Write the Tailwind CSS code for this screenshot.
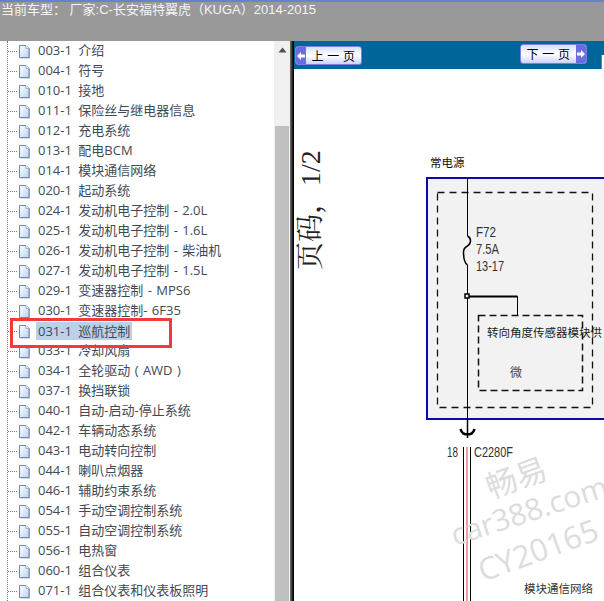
<!doctype html>
<html>
<head>
<meta charset="utf-8">
<script src="https://cdn.jsdelivr.net/npm/@tailwindcss/browser@4"></script>
</head>
<body class="bg-white">
<svg class="absolute w-0 h-0">
  <defs>
    <linearGradient id="page-fill" x1="0" y1="0" x2="1" y2="1">
      <stop offset="0" stop-color="#ffffff" />
      <stop offset="1" stop-color="#bcd2f5" />
    </linearGradient>
    <symbol id="page" viewBox="0 0 13 15">
      <path d="M2.500 2.500h7l2.500 2.500v9.500h-9.500z" fill="#b8b8b8" />
      <path d="M1.500 1.500h6.500l3 3v9h-9.500z" fill="url(#page-fill)" stroke="#6f86b4" stroke-width="1" />
      <path d="M8 1.500v3h3" fill="#f4f8ff" stroke="#9db0d0" stroke-width="1" />
    </symbol>
  </defs>
</svg>

<div class="w-[604px] h-[601px] overflow-hidden flex flex-col font-['Open_Sans','Noto_Sans_CJK_SC',sans-serif]">
  <!-- top bar -->
  <div class="h-[41px] shrink-0 bg-[#999999] border-t-2 border-[#6a80cf] text-[13px] leading-[15px] pl-px text-[#f4f4f4] whitespace-pre font-['Liberation_Sans','Noto_Sans_CJK_SC',sans-serif]">当前车型： 厂家:C-长安福特翼虎（KUGA）2014-2015</div>

  <div class="flex flex-1 min-h-0">
    <!-- tree -->
    <div class="w-[274px] shrink-0 relative text-[13px] text-[#414a54] [word-spacing:3px]">
      <div class="absolute left-[7px] top-0 bottom-0 border-l border-dotted border-[#777777]"></div>
      <div class="flex h-5 items-center"><span class="ml-[8px] w-[9px] border-t border-dotted border-[#777777]"></span><svg class="ml-px w-[13px] h-[15px]"><use href="#page" /></svg><span class="ml-[7px] whitespace-pre">003-1 介绍</span></div>
      <div class="flex h-5 items-center"><span class="ml-[8px] w-[9px] border-t border-dotted border-[#777777]"></span><svg class="ml-px w-[13px] h-[15px]"><use href="#page" /></svg><span class="ml-[7px] whitespace-pre">004-1 符号</span></div>
      <div class="flex h-5 items-center"><span class="ml-[8px] w-[9px] border-t border-dotted border-[#777777]"></span><svg class="ml-px w-[13px] h-[15px]"><use href="#page" /></svg><span class="ml-[7px] whitespace-pre">010-1 接地</span></div>
      <div class="flex h-5 items-center"><span class="ml-[8px] w-[9px] border-t border-dotted border-[#777777]"></span><svg class="ml-px w-[13px] h-[15px]"><use href="#page" /></svg><span class="ml-[7px] whitespace-pre">011-1 保险丝与继电器信息</span></div>
      <div class="flex h-5 items-center"><span class="ml-[8px] w-[9px] border-t border-dotted border-[#777777]"></span><svg class="ml-px w-[13px] h-[15px]"><use href="#page" /></svg><span class="ml-[7px] whitespace-pre">012-1 充电系统</span></div>
      <div class="flex h-5 items-center"><span class="ml-[8px] w-[9px] border-t border-dotted border-[#777777]"></span><svg class="ml-px w-[13px] h-[15px]"><use href="#page" /></svg><span class="ml-[7px] whitespace-pre">013-1 配电BCM</span></div>
      <div class="flex h-5 items-center"><span class="ml-[8px] w-[9px] border-t border-dotted border-[#777777]"></span><svg class="ml-px w-[13px] h-[15px]"><use href="#page" /></svg><span class="ml-[7px] whitespace-pre">014-1 模块通信网络</span></div>
      <div class="flex h-5 items-center"><span class="ml-[8px] w-[9px] border-t border-dotted border-[#777777]"></span><svg class="ml-px w-[13px] h-[15px]"><use href="#page" /></svg><span class="ml-[7px] whitespace-pre">020-1 起动系统</span></div>
      <div class="flex h-5 items-center"><span class="ml-[8px] w-[9px] border-t border-dotted border-[#777777]"></span><svg class="ml-px w-[13px] h-[15px]"><use href="#page" /></svg><span class="ml-[7px] whitespace-pre">024-1 发动机电子控制<span class="[word-spacing:1px]"> - 2.0L</span></span></div>
      <div class="flex h-5 items-center"><span class="ml-[8px] w-[9px] border-t border-dotted border-[#777777]"></span><svg class="ml-px w-[13px] h-[15px]"><use href="#page" /></svg><span class="ml-[7px] whitespace-pre">025-1 发动机电子控制<span class="[word-spacing:1px]"> - 1.6L</span></span></div>
      <div class="flex h-5 items-center"><span class="ml-[8px] w-[9px] border-t border-dotted border-[#777777]"></span><svg class="ml-px w-[13px] h-[15px]"><use href="#page" /></svg><span class="ml-[7px] whitespace-pre">026-1 发动机电子控制<span class="[word-spacing:1px]"> - 柴油机</span></span></div>
      <div class="flex h-5 items-center"><span class="ml-[8px] w-[9px] border-t border-dotted border-[#777777]"></span><svg class="ml-px w-[13px] h-[15px]"><use href="#page" /></svg><span class="ml-[7px] whitespace-pre">027-1 发动机电子控制<span class="[word-spacing:1px]"> - 1.5L</span></span></div>
      <div class="flex h-5 items-center"><span class="ml-[8px] w-[9px] border-t border-dotted border-[#777777]"></span><svg class="ml-px w-[13px] h-[15px]"><use href="#page" /></svg><span class="ml-[7px] whitespace-pre">029-1 变速器控制<span class="[word-spacing:1px]"> - MPS6</span></span></div>
      <div class="flex h-5 items-center"><span class="ml-[8px] w-[9px] border-t border-dotted border-[#777777]"></span><svg class="ml-px w-[13px] h-[15px]"><use href="#page" /></svg><span class="ml-[7px] whitespace-pre">030-1 变速器控制-<span class="[word-spacing:1px]"> 6F35</span></span></div>
      <!-- selected row -->
      <div class="flex h-5 items-center relative"><span class="ml-[8px] w-[9px] border-t border-dotted border-[#777777]"></span><svg class="ml-px w-[13px] h-[15px]"><use href="#page" /></svg><span class="ml-[5px] px-[2px] bg-[#bcd0ea] h-[18px] leading-[18px] whitespace-pre">031-1 巡航控制</span><div class="absolute left-[10px] -top-[3px] w-[162px] h-[30px] border-[3px] border-[#f33a3a] z-10"></div></div>
      <div class="flex h-5 items-center"><span class="ml-[8px] w-[9px] border-t border-dotted border-[#777777]"></span><svg class="ml-px w-[13px] h-[15px]"><use href="#page" /></svg><span class="ml-[7px] whitespace-pre">033-1 冷却风扇</span></div>
      <div class="flex h-5 items-center"><span class="ml-[8px] w-[9px] border-t border-dotted border-[#777777]"></span><svg class="ml-px w-[13px] h-[15px]"><use href="#page" /></svg><span class="ml-[7px] whitespace-pre">034-1 全轮驱动<span class="[word-spacing:1px]"> ( AWD )</span></span></div>
      <div class="flex h-5 items-center"><span class="ml-[8px] w-[9px] border-t border-dotted border-[#777777]"></span><svg class="ml-px w-[13px] h-[15px]"><use href="#page" /></svg><span class="ml-[7px] whitespace-pre">037-1 换挡联锁</span></div>
      <div class="flex h-5 items-center"><span class="ml-[8px] w-[9px] border-t border-dotted border-[#777777]"></span><svg class="ml-px w-[13px] h-[15px]"><use href="#page" /></svg><span class="ml-[7px] whitespace-pre">040-1 自动-启动-停止系统</span></div>
      <div class="flex h-5 items-center"><span class="ml-[8px] w-[9px] border-t border-dotted border-[#777777]"></span><svg class="ml-px w-[13px] h-[15px]"><use href="#page" /></svg><span class="ml-[7px] whitespace-pre">042-1 车辆动态系统</span></div>
      <div class="flex h-5 items-center"><span class="ml-[8px] w-[9px] border-t border-dotted border-[#777777]"></span><svg class="ml-px w-[13px] h-[15px]"><use href="#page" /></svg><span class="ml-[7px] whitespace-pre">043-1 电动转向控制</span></div>
      <div class="flex h-5 items-center"><span class="ml-[8px] w-[9px] border-t border-dotted border-[#777777]"></span><svg class="ml-px w-[13px] h-[15px]"><use href="#page" /></svg><span class="ml-[7px] whitespace-pre">044-1 喇叭点烟器</span></div>
      <div class="flex h-5 items-center"><span class="ml-[8px] w-[9px] border-t border-dotted border-[#777777]"></span><svg class="ml-px w-[13px] h-[15px]"><use href="#page" /></svg><span class="ml-[7px] whitespace-pre">046-1 辅助约束系统</span></div>
      <div class="flex h-5 items-center"><span class="ml-[8px] w-[9px] border-t border-dotted border-[#777777]"></span><svg class="ml-px w-[13px] h-[15px]"><use href="#page" /></svg><span class="ml-[7px] whitespace-pre">054-1 手动空调控制系统</span></div>
      <div class="flex h-5 items-center"><span class="ml-[8px] w-[9px] border-t border-dotted border-[#777777]"></span><svg class="ml-px w-[13px] h-[15px]"><use href="#page" /></svg><span class="ml-[7px] whitespace-pre">055-1 自动空调控制系统</span></div>
      <div class="flex h-5 items-center"><span class="ml-[8px] w-[9px] border-t border-dotted border-[#777777]"></span><svg class="ml-px w-[13px] h-[15px]"><use href="#page" /></svg><span class="ml-[7px] whitespace-pre">056-1 电热窗</span></div>
      <div class="flex h-5 items-center"><span class="ml-[8px] w-[9px] border-t border-dotted border-[#777777]"></span><svg class="ml-px w-[13px] h-[15px]"><use href="#page" /></svg><span class="ml-[7px] whitespace-pre">060-1 组合仪表</span></div>
      <div class="flex h-5 items-center"><span class="ml-[8px] w-[9px] border-t border-dotted border-[#777777]"></span><svg class="ml-px w-[13px] h-[15px]"><use href="#page" /></svg><span class="ml-[7px] whitespace-pre">071-1 组合仪表和仪表板照明</span></div>
    </div>

    <!-- scrollbar -->
    <div class="w-4 shrink-0 bg-[#f0f0f0] flex flex-col items-center">
      <svg class="mt-[6px] w-[9px] h-[6px]" viewBox="0 0 9 6"><path d="M4.500 0.500L8.500 5.500H0.500z" fill="#505050" /></svg>
      <div class="mt-[73px] w-[14px] flex-1 bg-[#c0c0c0]"></div>
    </div>
    <div class="w-[4px] shrink-0 bg-gradient-to-r from-[#777777] via-[#333333] to-black"></div>

    <!-- document -->
    <div class="flex-1 min-w-0 flex flex-col">
      <div class="h-7 shrink-0 bg-[#006699] flex justify-between pl-px pr-[17px] relative">
        <button class="mt-[5px] w-[67px] h-[19px] flex items-center overflow-hidden rounded-[3px] border border-[#7c80dc] bg-gradient-to-b from-[#d8ddfb] via-white to-[#ccd2fa] text-[12px] leading-none text-black font-['Noto_Sans_CJK_SC',sans-serif]">
          <span class="w-[10px] h-full shrink-0 bg-[#6a6ce0] flex items-center justify-center">
            <svg class="w-[8px] h-[8px]" viewBox="0 0 8 8"><path d="M0 4L4 0V2.500H8V5.500H4V8z" fill="#ffffff" /></svg>
          </span>
          <span class="flex-1 text-center tracking-[0.5px] whitespace-pre">上 一 页</span>
        </button>
        <button class="mt-[3px] w-[67px] h-[20px] flex items-center overflow-hidden rounded-[3px] border border-[#7c80dc] bg-gradient-to-b from-[#d8ddfb] via-white to-[#ccd2fa] text-[12px] leading-none text-black font-['Noto_Sans_CJK_SC',sans-serif]">
          <span class="flex-1 text-center tracking-[0.5px] whitespace-pre">下 一 页</span>
          <span class="w-[10px] h-full shrink-0 bg-[#6a6ce0] flex items-center justify-center">
            <svg class="w-[8px] h-[8px]" viewBox="0 0 8 8"><path d="M8 4L4 0V2.500H0V5.500H4V8z" fill="#ffffff" /></svg>
          </span>
        </button>
        <div class="absolute right-0 top-[14px] w-[3px] h-[14px] bg-white border-l border-[#6f74d6]"></div>
      </div>

      <!-- wiring diagram, drawn in page coordinates -->
      <div class="flex-1 min-h-0 bg-white overflow-hidden">
        <svg class="block" width="310" height="532" viewBox="294 69 310 532">
          <text transform="translate(320 270) rotate(-90)" font-family="'Liberation Serif','Noto Serif CJK SC','Noto Sans CJK SC',serif" font-size="28" fill="#222222">页码，1/2</text>
          <text x="430" y="167" font-family="'Noto Sans CJK SC',sans-serif" font-size="11.500" fill="#111111">常电源</text>

          <rect x="427" y="178" width="180" height="241" fill="#f2f2f2" stroke="#0a0aa8" stroke-width="2" />
          <rect x="437.500" y="192.500" width="155" height="215" fill="none" stroke="#111111" stroke-width="1.300" stroke-dasharray="7 5" />
          <rect x="478.500" y="315.500" width="104" height="75" fill="none" stroke="#111111" stroke-width="1.500" stroke-dasharray="7 4" />

          <path d="M467.500 178V236M467.500 265V433" fill="none" stroke="#000000" />
          <path d="M467.500 236c4 2 4 7 0 10c-2 1-4 2-4 6c0 5 1 11 4 13" fill="none" stroke="#000000" stroke-width="1.500" />
          <rect x="465" y="294" width="4" height="4" fill="#f2f2f2" stroke="#000000" stroke-width="1.500" />
          <path d="M469 296.500H517.500V315" fill="none" stroke="#000000" />
          <path d="M469 296.500H517.500" fill="none" stroke="#000000" stroke-width="2" />

          <g font-family="'Liberation Sans',sans-serif" font-size="15" fill="#333333">
            <text x="476" y="237" textLength="20" lengthAdjust="spacingAndGlyphs">F72</text>
            <text x="476" y="254" textLength="23" lengthAdjust="spacingAndGlyphs">7.5A</text>
            <text x="476" y="271" textLength="28" lengthAdjust="spacingAndGlyphs">13-17</text>
          </g>
          <text x="487" y="337" font-family="'Noto Sans CJK SC',sans-serif" font-size="11.500" fill="#222222">转向角度传感器模块供</text>
          <text x="510" y="377" font-family="'Noto Sans CJK SC',sans-serif" font-size="12" fill="#444444">微</text>

          <path d="M460.500 429c1 4 4 6 7 5c3 1 6-1 7-5" fill="none" stroke="#000000" stroke-width="2.500" />
          <path d="M467.500 419V438" fill="none" stroke="#000000" stroke-width="1.500" />
          <path d="M463.500 447V601M470.500 447V601" fill="none" stroke="#000000" />
          <path d="M467 447V601" fill="none" stroke="#d93c3c" />
          <text x="447" y="457" font-family="'Liberation Sans',sans-serif" font-size="15" fill="#333333" textLength="11" lengthAdjust="spacingAndGlyphs">18</text>
          <text x="474" y="457" font-family="'Liberation Sans',sans-serif" font-size="15" fill="#333333" textLength="39" lengthAdjust="spacingAndGlyphs">C2280F</text>
          <text x="524" y="593" font-family="'Noto Sans CJK SC',sans-serif" font-size="11.500" fill="#333333">模块通信网络</text>

          <g font-family="'Open Sans','Noto Sans CJK SC',sans-serif" fill="#dcdcdc">
            <text transform="translate(491 499) rotate(-20)" font-size="31">畅易</text>
            <text transform="translate(455 546) rotate(-18)" font-size="30">car388.com</text>
            <text transform="translate(483 582) rotate(-20)" font-size="31">CY20165</text>
          </g>
        </svg>
      </div>
    </div>
  </div>
</div>
</body>
</html>
